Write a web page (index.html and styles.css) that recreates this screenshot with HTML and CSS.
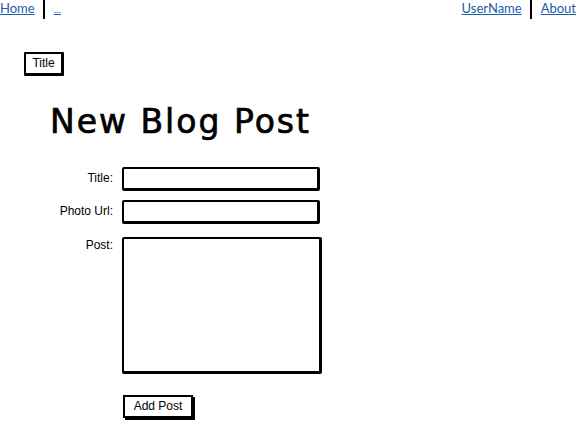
FILE: index.html
```html
<!DOCTYPE html>
<html>
<head>
<meta charset="utf-8">
<link rel="stylesheet" href="styles.css">
</head>
<body>
<nav class="topbar">
  <div class="links">
    <a class="link" href="#">Home</a>
    <span class="sep"></span>
    <a class="link small" href="#">...</a>
  </div>
  <div class="links">
    <a class="link" href="#">UserName</a>
    <span class="sep"></span>
    <a class="link" href="#">About</a>
  </div>
</nav>
<div class="crumb"><span class="title-btn">Title</span></div>
<h1 class="heading">New Blog Post</h1>
<form class="form">
  <label class="lbl">Title:</label>
  <div class="field"></div>
  <label class="lbl">Photo Url:</label>
  <div class="field"></div>
  <label class="lbl">Post:</label>
  <div class="field area"></div>
  <span></span>
  <div class="actions"><span class="btn">Add Post</span></div>
</form>
</body>
</html>
```
FILE: styles.css
```css
html, body {
  margin: 0;
  padding: 0;
  background: #fff;
  width: 576px;
  height: 421px;
  overflow: hidden;
}
body {
  font-family: "Liberation Sans", Arial, sans-serif;
  color: #000;
}
.topbar {
  display: flex;
  justify-content: space-between;
  height: 20px;
}
.links {
  display: flex;
  align-items: flex-start;
}
.link {
  font-family: Lato, "Liberation Sans", sans-serif;
  font-size: 13px;
  color: #1a5ea8;
  text-decoration: underline;
  line-height: 16px;
}
.link.small {
  font-size: 10px;
  line-height: 14px;
  padding-top: 2px;
}
.sep {
  width: 2px;
  height: 19px;
  background: #000;
  margin: 0 9px 0 8px;
}
.crumb {
  padding: 32px 0 0 24px;
  height: 24px;
}
.title-btn {
  display: inline-block;
  box-sizing: border-box;
  height: 24px;
  width: 40px;
  border: 2px solid #000;
  border-right-width: 3px;
  border-bottom-width: 3px;
  border-radius: 1px;
  font-size: 12px;
  line-height: 18px;
  text-align: center;
}
.heading {
  margin: 0;
  padding: 24px 0 0 50px;
  font-family: "DejaVu Sans", sans-serif;
  font-weight: 400;
  font-size: 33px;
  letter-spacing: 2px;
  -webkit-text-stroke: 0.7px #000;
  line-height: 44px;
  height: 44px;
}
.form {
  display: grid;
  grid-template-columns: 117px 198px;
  column-gap: 5px;
  row-gap: 9px;
  margin-top: 23px;
}
.lbl {
  font-size: 12px;
  text-align: right;
  line-height: 16px;
  padding-top: 3px;
  padding-right: 4px;
}
.field {
  box-sizing: border-box;
  height: 24px;
  border: 2px solid #000;
  border-bottom-width: 3px;
  border-right-width: 3px;
  border-radius: 2px;
}
.area {
  height: 137px;
  width: 200px;
  margin-top: 4px;
}
.form .lbl:nth-of-type(3) {
  padding-top: 4px;
}
.actions {
  padding-top: 12px;
}
.btn {
  display: inline-block;
  box-sizing: border-box;
  margin-left: 1px;
  height: 23px;
  width: 70px;
  border: 2px solid #000;
  box-shadow: 2px 2px 0 #000;
  font-size: 12px;
  line-height: 19px;
  text-align: center;
}
```
